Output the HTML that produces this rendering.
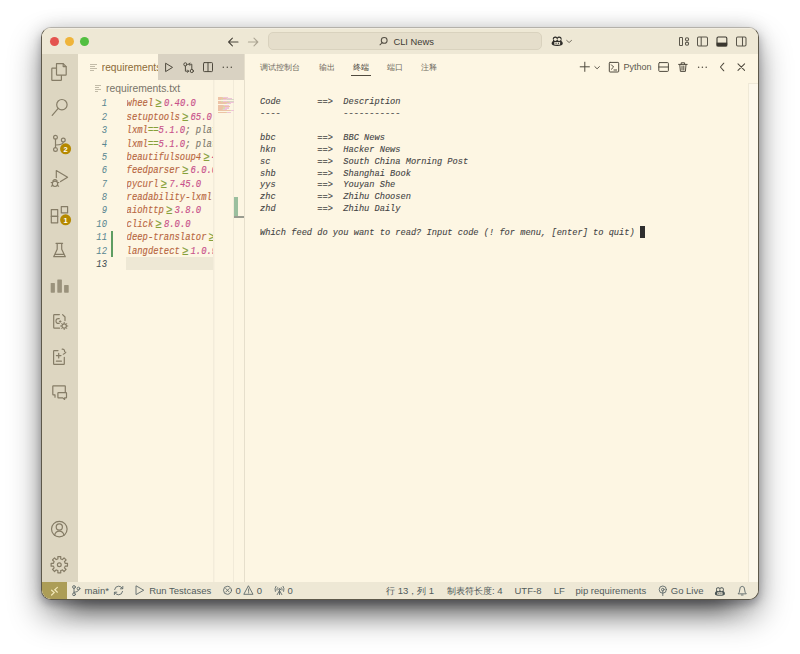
<!DOCTYPE html>
<html><head><meta charset="utf-8">
<style>
*{margin:0;padding:0;box-sizing:border-box}
html,body{width:800px;height:654px;background:#fff;overflow:hidden;font-family:"Liberation Sans",sans-serif}
.win{position:absolute;left:41px;top:27px;width:718px;height:573px;border:1px solid #5d584a;border-top-color:#b4b1aa;border-radius:10px;overflow:hidden;background:#FDF6E3;
 box-shadow:0 16px 32px rgba(0,0,0,.42),0 0 18px rgba(0,0,0,.14),-2px 5px 7px rgba(0,0,25,.10),2px 5px 7px rgba(0,0,25,.10)}
.a{position:absolute}
.t{position:absolute;white-space:pre}
.ov{position:absolute;left:0;top:0;width:716px;height:571px;overflow:visible}
.dot{position:absolute;top:9px;width:9px;height:9px;border-radius:50%}
.ln{position:absolute;left:45px;transform:translateY(2.0px) scaleY(1.16);transform-origin:0 50%;width:20px;text-align:right;font-family:"Liberation Mono",monospace;font-style:italic;font-size:8.9px;line-height:13.375px;color:#588590}
.ln.cur{color:#3f4c50}
.code{position:absolute;left:84.6px;transform:translateY(2.0px) scaleY(1.16);transform-origin:0 50%;-webkit-text-stroke:.12px currentColor;width:88px;overflow:hidden;font-family:"Liberation Mono",monospace;font-style:italic;font-size:8.9px;line-height:13.375px;white-space:pre}
.k{color:#B8663F}.o{color:#86A03A}.v{color:#C8508A}.g{color:#7f7a6e}
.lig{display:inline-block;width:10.68px;text-align:center;font-size:11px;line-height:10px;vertical-align:top;position:relative;top:1px}
.term{position:absolute;left:218px;transform:translateY(1.3px) scaleY(1.04);transform-origin:0 50%;-webkit-text-stroke:.1px currentColor;font-family:"Liberation Mono",monospace;font-style:italic;font-size:8.68px;line-height:12px;white-space:pre;color:#444}
.ptab{position:absolute;top:35px;font-size:8px;color:#6e6a60;line-height:10px;white-space:pre}
.cj{font-size:8.9px}
.st{position:absolute;top:556.8px;font-size:9.5px;line-height:11px;color:#525c5c;white-space:pre}
</style></head><body>
<div style="position:absolute;left:71px;top:420px;width:658px;height:180px;box-shadow:0 9.8px 23px rgba(0,0,0,.4)"></div>
<div class="win">
 <div class="a" style="left:0;top:0;width:716px;height:26px;background:#EEE8D5"></div><div class="a" style="left:0;top:0;width:716px;height:1px;background:#F3EEE2"></div>
 <div class="dot" style="left:8px;background:#E4544F"></div>
 <div class="dot" style="left:23px;background:#EFB43A"></div>
 <div class="dot" style="left:38px;background:#52BF40"></div>
 <div class="a" style="left:226px;top:4px;width:274px;height:18px;border-radius:5px;background:#E5DECB;border:1px solid #D9D2BE"></div>
 <div class="t" style="left:351.4px;top:8px;font-size:9.4px;line-height:11px;color:#3f3c36">CLI News</div>

 <div class="a" style="left:0;top:26px;width:35.5px;height:528px;background:#DDD6C1"></div>

 <div class="a" style="left:35.5px;top:26px;width:166.5px;height:25.5px;background:#D9D2C2"></div>
 <div class="a" style="left:35.5px;top:26px;width:80.5px;height:25.5px;background:#FDF6E3"></div>
 <div class="t" style="left:59.8px;top:34px;font-size:10.2px;line-height:11px;color:#8C6A36;width:56px;overflow:hidden">requirements.txt</div>
 <div class="t" style="left:64px;top:54.6px;font-size:10.35px;line-height:11px;color:#78746a">requirements.txt</div>

 <div class="a" style="left:84px;top:228.9px;width:89px;height:13.5px;background:#EEE8D5"></div>
 <div class="a" style="left:69px;top:203px;width:2px;height:25.6px;background:#5E9D62"></div>
<div class="ln" style="top:68.400px">1</div>
<div class="code" style="top:68.400px"><span class="k">wheel</span><span class="o lig">≥</span><span class="v">0.40.0</span></div>
<div class="ln" style="top:81.775px">2</div>
<div class="code" style="top:81.775px"><span class="k">setuptools</span><span class="o lig">≥</span><span class="v">65.0.0</span></div>
<div class="ln" style="top:95.150px">3</div>
<div class="code" style="top:95.150px"><span class="k">lxml</span><span class="o">==</span><span class="v">5.1.0</span><span class="g">; platform</span></div>
<div class="ln" style="top:108.525px">4</div>
<div class="code" style="top:108.525px"><span class="k">lxml</span><span class="o">==</span><span class="v">5.1.0</span><span class="g">; platform</span></div>
<div class="ln" style="top:121.900px">5</div>
<div class="code" style="top:121.900px"><span class="k">beautifulsoup4</span><span class="o lig">≥</span><span class="v">4.12</span></div>
<div class="ln" style="top:135.275px">6</div>
<div class="code" style="top:135.275px"><span class="k">feedparser</span><span class="o lig">≥</span><span class="v">6.0.0</span></div>
<div class="ln" style="top:148.650px">7</div>
<div class="code" style="top:148.650px"><span class="k">pycurl</span><span class="o lig">≥</span><span class="v">7.45.0</span></div>
<div class="ln" style="top:162.025px">8</div>
<div class="code" style="top:162.025px"><span class="k">readability-lxml</span></div>
<div class="ln" style="top:175.400px">9</div>
<div class="code" style="top:175.400px"><span class="k">aiohttp</span><span class="o lig">≥</span><span class="v">3.8.0</span></div>
<div class="ln" style="top:188.775px">10</div>
<div class="code" style="top:188.775px"><span class="k">click</span><span class="o lig">≥</span><span class="v">8.0.0</span></div>
<div class="ln" style="top:202.150px">11</div>
<div class="code" style="top:202.150px"><span class="k">deep-translator</span><span class="o lig">≥</span><span class="v">1.11</span></div>
<div class="ln" style="top:215.525px">12</div>
<div class="code" style="top:215.525px"><span class="k">langdetect</span><span class="o lig">≥</span><span class="v">1.0.9</span></div>
<div class="ln cur" style="top:228.900px">13</div>
<div class="code" style="top:228.900px"></div>
 <div class="a" style="left:171px;top:51.5px;width:1px;height:502.5px;background:#F3ECDA"></div><div class="a" style="left:172px;top:51.5px;width:1px;height:502.5px;background:#F8F1DF"></div>
 <div class="a" style="left:191px;top:51.5px;width:1px;height:502.5px;background:#F1EAD8"></div>
<div class="a" style="left:176.00px;top:68.60px;width:3.90px;height:1.05px;background:#EDC3A6"></div>
<div class="a" style="left:179.90px;top:68.60px;width:1.50px;height:1.05px;background:#D6DCB0"></div>
<div class="a" style="left:181.40px;top:68.60px;width:4.68px;height:1.05px;background:#EFC3D8"></div>
<div class="a" style="left:176.00px;top:69.96px;width:7.80px;height:1.05px;background:#EDC3A6"></div>
<div class="a" style="left:183.80px;top:69.96px;width:1.50px;height:1.05px;background:#D6DCB0"></div>
<div class="a" style="left:185.30px;top:69.96px;width:4.68px;height:1.05px;background:#EFC3D8"></div>
<div class="a" style="left:176.00px;top:71.32px;width:3.12px;height:1.05px;background:#EDC3A6"></div>
<div class="a" style="left:179.12px;top:71.32px;width:1.56px;height:1.05px;background:#D6DCB0"></div>
<div class="a" style="left:180.68px;top:71.32px;width:3.90px;height:1.05px;background:#EFC3D8"></div>
<div class="a" style="left:184.58px;top:71.32px;width:7.42px;height:1.05px;background:#D9D4C6"></div>
<div class="a" style="left:176.00px;top:72.68px;width:3.12px;height:1.05px;background:#EDC3A6"></div>
<div class="a" style="left:179.12px;top:72.68px;width:1.56px;height:1.05px;background:#D6DCB0"></div>
<div class="a" style="left:180.68px;top:72.68px;width:3.90px;height:1.05px;background:#EFC3D8"></div>
<div class="a" style="left:184.58px;top:72.68px;width:7.42px;height:1.05px;background:#D9D4C6"></div>
<div class="a" style="left:176.00px;top:74.04px;width:10.92px;height:1.05px;background:#EDC3A6"></div>
<div class="a" style="left:186.92px;top:74.04px;width:1.50px;height:1.05px;background:#D6DCB0"></div>
<div class="a" style="left:188.42px;top:74.04px;width:3.12px;height:1.05px;background:#EFC3D8"></div>
<div class="a" style="left:176.00px;top:75.40px;width:7.80px;height:1.05px;background:#EDC3A6"></div>
<div class="a" style="left:183.80px;top:75.40px;width:1.50px;height:1.05px;background:#D6DCB0"></div>
<div class="a" style="left:185.30px;top:75.40px;width:3.90px;height:1.05px;background:#EFC3D8"></div>
<div class="a" style="left:176.00px;top:76.76px;width:4.68px;height:1.05px;background:#EDC3A6"></div>
<div class="a" style="left:180.68px;top:76.76px;width:1.50px;height:1.05px;background:#D6DCB0"></div>
<div class="a" style="left:182.18px;top:76.76px;width:4.68px;height:1.05px;background:#EFC3D8"></div>
<div class="a" style="left:176.00px;top:78.12px;width:12.48px;height:1.05px;background:#EDC3A6"></div>
<div class="a" style="left:176.00px;top:79.48px;width:5.46px;height:1.05px;background:#EDC3A6"></div>
<div class="a" style="left:181.46px;top:79.48px;width:1.50px;height:1.05px;background:#D6DCB0"></div>
<div class="a" style="left:182.96px;top:79.48px;width:3.90px;height:1.05px;background:#EFC3D8"></div>
<div class="a" style="left:176.00px;top:80.84px;width:3.90px;height:1.05px;background:#EDC3A6"></div>
<div class="a" style="left:179.90px;top:80.84px;width:1.50px;height:1.05px;background:#D6DCB0"></div>
<div class="a" style="left:181.40px;top:80.84px;width:3.90px;height:1.05px;background:#EFC3D8"></div>
<div class="a" style="left:176.00px;top:82.20px;width:11.70px;height:1.05px;background:#EDC3A6"></div>
<div class="a" style="left:187.70px;top:82.20px;width:1.50px;height:1.05px;background:#D6DCB0"></div>
<div class="a" style="left:189.20px;top:82.20px;width:2.80px;height:1.05px;background:#EFC3D8"></div>
<div class="a" style="left:176.00px;top:83.56px;width:7.80px;height:1.05px;background:#EDC3A6"></div>
<div class="a" style="left:183.80px;top:83.56px;width:1.50px;height:1.05px;background:#D6DCB0"></div>
<div class="a" style="left:185.30px;top:83.56px;width:3.90px;height:1.05px;background:#EFC3D8"></div>
 <div class="a" style="left:192px;top:169px;width:3.6px;height:19px;background:#9BBF9E"></div>
 <div class="a" style="left:192px;top:188px;width:10.4px;height:1.6px;background:#9a9c90"></div>

 <div class="a" style="left:202px;top:26px;width:1px;height:528px;background:#E6DFCC"></div>
 <div class="ptab" style="left:218px">调试控制台</div>
 <div class="ptab" style="left:276.75px">输出</div>
 <div class="ptab" style="left:310.5px;color:#3f3c36">终端</div>
 <div class="ptab" style="left:345px">端口</div>
 <div class="ptab" style="left:379px">注释</div>
 <div class="a" style="left:309px;top:46.8px;width:19.5px;height:1px;background:#4f4a3e"></div>
 <div class="t" style="left:581.5px;top:34.3px;font-size:9px;line-height:11px;color:#5a564b">Python</div>
<div class="term" style="top:67.40px">Code       ==>  Description</div>
<div class="term" style="top:79.25px">----            -----------</div>
<div class="term" style="top:102.95px">bbc        ==>  BBC News</div>
<div class="term" style="top:114.80px">hkn        ==>  Hacker News</div>
<div class="term" style="top:126.65px">sc         ==>  South China Morning Post</div>
<div class="term" style="top:138.50px">shb        ==>  Shanghai Book</div>
<div class="term" style="top:150.35px">yys        ==>  Youyan She</div>
<div class="term" style="top:162.20px">zhc        ==>  Zhihu Choosen</div>
<div class="term" style="top:174.05px">zhd        ==>  Zhihu Daily</div>
<div class="term" style="top:197.75px">Which feed do you want to read? Input code (! for menu, [enter] to quit) </div>
 <div class="a" style="left:598px;top:197.75px;width:5px;height:12px;background:#2e2e2e"></div>
 <div class="a" style="left:707px;top:56px;width:9px;height:498px;background:#FDF8EB"></div><div class="a" style="left:706px;top:55px;width:1px;height:499px;background:#EFE9D7"></div><div class="a" style="left:706px;top:55px;width:10px;height:1px;background:#EFE9D7"></div>

 <div class="a" style="left:0;top:554px;width:716px;height:17px;background:#EEE8D5"></div>
 <div class="a" style="left:0;top:554px;width:24.75px;height:17px;background:#AC9D57"></div>
 <div class="st" style="left:42.6px">main*</div>
 <div class="st" style="left:107.2px">Run Testcases</div>
 <div class="st" style="left:193.5px">0</div>
 <div class="st" style="left:214.8px">0</div>
 <div class="st" style="left:245.5px">0</div>
 <div class="st" style="left:344px"><span class="cj">行</span> 13<span class="cj">，列</span> 1</div>
 <div class="st" style="left:405px"><span class="cj">制表符长度</span>: 4</div>
 <div class="st" style="left:472.5px">UTF-8</div>
 <div class="st" style="left:511.75px">LF</div>
 <div class="st" style="left:533.5px">pip requirements</div>
 <div class="st" style="left:628.75px">Go Live</div>

 <svg class="ov" viewBox="42 28 716 571" width="716" height="571">

<!-- activity bar icons -->
<g stroke="#857c66" fill="none" stroke-width="1.2" stroke-linejoin="round" stroke-linecap="round">
 <path d="M55.9 68.2H52.4Q51.8 68.2 51.8 68.8V79.9Q51.8 80.4 52.4 80.4H60.8Q61.4 80.4 61.4 79.9V75.6"/>
 <path d="M56.5 63.7H63.2L66.2 66.7V74.5Q66.2 75.1 65.6 75.1H57.1Q56.5 75.1 56.5 74.5Z"/>
 <path d="M63.2 63.9V66.6H66"/>
 <circle cx="61.9" cy="104.7" r="5.2"/>
 <path d="M58.2 108.4L52.2 115.4"/>
 <circle cx="55.5" cy="137.3" r="1.9"/>
 <circle cx="63.3" cy="140.1" r="1.9"/>
 <circle cx="55.5" cy="149.5" r="1.9"/>
 <path d="M55.5 139.2V147.6M63.3 142Q63.3 144.8 55.8 145"/>
 <path d="M56.3 177.6V170.6L67.6 177.2L60.6 181.6"/>
 <circle cx="55" cy="183.8" r="2.7"/>
 <path d="M53 180.6Q55 178.8 57 180.6M51.2 182.5H52.3M57.7 182.5H58.8M51.4 186.2L52.7 185.3M58.6 186.2L57.3 185.3"/>
 <rect x="51.3" y="209.6" width="6.4" height="6.8"/>
 <rect x="51.3" y="216.4" width="6.4" height="6.4"/>
 <rect x="61.3" y="206.6" width="6.3" height="6.3"/>
 <path d="M56 243.3H62.6M57.2 243.5V249.2L53.7 256.7H65.3L61.7 249.2V243.5M54.9 254.3H64.2"/>
 <path d="M59.4 314.6H54.4Q53.7 314.6 53.7 315.3V327.6Q53.7 328.2 54.4 328.2H59.6M62.6 314.6L65 317V320.6"/>
 <path d="M59.2 318.6Q56 318.2 56 321Q56 323.8 59.2 323.3"/>
 <circle cx="64.2" cy="326" r="2.2"/>
 <path d="M64.2 322.4V323.3M64.2 328.7V329.6M60.6 326H61.5M66.9 326H67.8M61.7 323.5L62.3 324.1M66.1 327.9L66.7 328.5M66.7 323.5L66.1 324.1M62.3 327.9L61.7 328.5" stroke-width="1"/>
 <path d="M60.2 320.6V322.4M59.3 321.5H61.1" stroke-width=".9"/>
 <path d="M58 350.6H54.2Q53.6 350.6 53.6 351.2V363.7Q53.6 364.3 54.2 364.3H63.8Q64.3 364.3 64.3 363.7V357.3M58.7 353.3V358M56.4 355.6H61M56.4 361.2H61.4M62.2 349.2Q64.6 349 64.6 351.6M63.3 354.2Q65 353.6 65.8 352.2"/>
 <path d="M55 397.2V394.8H53.3Q52.8 394.8 52.8 394.2V386.3Q52.8 385.8 53.3 385.8H64.8Q65.3 385.8 65.3 386.3V392.4"/>
 <path d="M58.4 392.6H66Q66.5 392.6 66.5 393.2V397.3Q66.5 397.9 66 397.9H64.6V399.5L62.8 397.9H58.4Q57.9 397.9 57.9 397.3V393.2Q57.9 392.6 58.4 392.6Z"/>
 <circle cx="59.3" cy="529.1" r="7.8"/>
 <circle cx="59.3" cy="527" r="3.1"/>
 <path d="M54.6 535.4Q55.4 531.2 59.3 531.2Q63.2 531.2 64 535.4"/>
 <path d="M57.54 558.97 L57.90 558.87 L57.84 556.53 L60.76 556.53 L60.70 558.87 L61.06 558.97 L62.11 559.40 L62.43 559.58 L64.05 557.89 L66.11 559.95 L64.42 561.57 L64.60 561.89 L65.03 562.94 L65.13 563.30 L67.47 563.24 L67.47 566.16 L65.13 566.10 L65.03 566.46 L64.60 567.51 L64.42 567.83 L66.11 569.45 L64.05 571.51 L62.43 569.82 L62.11 570.00 L61.06 570.43 L60.70 570.53 L60.76 572.87 L57.84 572.87 L57.90 570.53 L57.54 570.43 L56.49 570.00 L56.17 569.82 L54.55 571.51 L52.49 569.45 L54.18 567.83 L54.00 567.51 L53.57 566.46 L53.47 566.10 L51.13 566.16 L51.13 563.24 L53.47 563.30 L53.57 562.94 L54.00 561.89 L54.18 561.57 L52.49 559.95 L54.55 557.89 L56.17 559.58 L56.49 559.40Z"/>
 <circle cx="59.3" cy="564.7" r="1.9"/>
</g>
<g fill="#9a927c">
 <rect x="50.7" y="283" width="4.2" height="9.7" rx=".6"/>
 <rect x="57.3" y="279.4" width="4.6" height="13.3" rx=".6"/>
 <rect x="64.1" y="285.1" width="4.6" height="7.6" rx=".6"/>
</g>
<circle cx="65.6" cy="148.8" r="5.5" fill="#B58900"/>
<circle cx="65.6" cy="219.8" r="5.5" fill="#B58900"/>
<text x="65.6" y="151.6" font-size="7.5" font-weight="bold" fill="#fff" text-anchor="middle" font-family="Liberation Sans">2</text>
<text x="65.6" y="222.6" font-size="7.5" font-weight="bold" fill="#fff" text-anchor="middle" font-family="Liberation Sans">1</text>

<!-- title bar -->
<g stroke="#4a463c" fill="none" stroke-width="1.1" stroke-linecap="round" stroke-linejoin="round">
 <path d="M238 42H228.6M232.4 38.2L228.6 42L232.4 45.8"/>
</g>
<g stroke="#aca593" fill="none" stroke-width="1.1" stroke-linecap="round" stroke-linejoin="round">
 <path d="M248.4 42H257.8M254 38.2L257.8 42L254 45.8"/>
</g>
<g stroke="#555045" fill="none" stroke-width="1.05" stroke-linecap="round">
 <circle cx="384.2" cy="40.4" r="2.9"/>
 <path d="M382.2 42.5L380 44.8"/>
</g>
<path d="M551.6 43.6Q551.6 41.6 553 40.9V40.2Q552.4 38.4 553.3 37.3Q554.2 36.3 555.6 36.5Q556.6 36.7 557.2 37.5Q557.8 36.7 558.8 36.5Q560.2 36.3 561.1 37.3Q562 38.4 561.4 40.2V40.9Q562.8 41.6 562.8 43.6Q562.8 45.9 557.2 45.9Q551.6 45.9 551.6 43.6Z" fill="#2f2d29"/>
<circle cx="555.3" cy="39.3" r="1.6" fill="#EEE8D5"/><circle cx="559.1" cy="39.3" r="1.6" fill="#EEE8D5"/>
<rect x="554.3" y="41.9" width="5.8" height="2.9" rx=".6" fill="#EEE8D5"/>
<rect x="555.6" y="42.6" width=".9" height="1.5" fill="#2f2d29"/><rect x="557.9" y="42.6" width=".9" height="1.5" fill="#2f2d29"/>
<path d="M566.4 40.2l2.7 2.3 2.7-2.3" stroke="#666052" fill="none" stroke-width=".9"/>
<g stroke="#5a564b" fill="none" stroke-width="1.05">
 <rect x="679.5" y="37.5" width="3" height="8" rx=".6"/>
 <circle cx="687" cy="39.3" r="1.6"/>
 <circle cx="687" cy="43.7" r="1.6"/>
 <rect x="697.5" y="37" width="10" height="9" rx="1.2"/>
 <path d="M701.2 37V46"/>
 <rect x="736.5" y="37" width="9.5" height="9" rx="1.2"/>
 <path d="M742.5 37V46"/>
</g>
<rect x="717" y="37" width="9.8" height="9" rx="1.2" stroke="#3a372f" fill="none" stroke-width="1.1"/>
<rect x="716.6" y="42.6" width="10.6" height="3.8" fill="#3a372f"/>

<!-- tab icons -->
<g stroke="#c2bba8" stroke-width="1">
 <path d="M90 64.5H97M90 66.5H95M90 68.5H97M90 70.5H94"/>
 <path d="M95 85.5H101M95 87.5H99M95 89.5H101M95 91.5H98"/>
</g>
<!-- editor actions -->
<g stroke="#4F4A3E" fill="none" stroke-width="1" stroke-linejoin="round" stroke-linecap="round">
 <path d="M165.6 63.6V71.6L172.2 67.6Z"/>
 <circle cx="185.4" cy="64.4" r="1.6"/>
 <circle cx="191.8" cy="71" r="1.6"/>
 <path d="M185.4 66V71.2H188.5M187.5 70L188.7 71.2L187.5 72.4M191.8 69.4V64.2H188.8M189.8 63L188.6 64.2L189.8 65.4"/>
 <rect x="203.5" y="62.6" width="9" height="9" rx=".8"/>
 <path d="M208 62.6V71.6"/>
</g>
<g fill="#4F4A3E"><circle cx="223.3" cy="67.2" r=".75"/><circle cx="227.3" cy="67.2" r=".75"/><circle cx="231.3" cy="67.2" r=".75"/></g>

<!-- panel actions -->
<g stroke="#4F4A3E" fill="none" stroke-width="1" stroke-linejoin="round" stroke-linecap="round">
 <path d="M584.8 62.2V71.4M580.2 66.8H589.4"/>
 <path d="M594.8 66.6L597.1 68.8L599.4 66.6" stroke-width=".9"/>
 <rect x="609.3" y="62.4" width="9.4" height="9.6" rx=".8"/>
 <path d="M611.4 64.8L613.6 67L611.4 69.2M614 70H616.6"/>
 <rect x="658.8" y="62.6" width="9.6" height="8.8" rx=".8"/>
 <path d="M658.8 67H668.4"/>
 <path d="M678.6 64.4H687.2M681.2 64.2V62.8H684.6V64.2M679.8 64.6L680.4 71.4H685.4L686 64.6M682 66V70M683.8 66V70"/>
 <path d="M723.8 63.2L720.4 67L723.8 70.8" stroke-width="1.05"/>
 <path d="M738 63.8L744.6 70.4M744.6 63.8L738 70.4" stroke-width="1.05"/>
</g>
<g fill="#4F4A3E"><circle cx="698.6" cy="67.2" r=".75"/><circle cx="702.4" cy="67.2" r=".75"/><circle cx="706.2" cy="67.2" r=".75"/></g>

<!-- status bar icons -->
<path d="M51.6 590.2L54.2 592.6L51.6 595M57.4 587.4L54.8 589.8L57.4 592.2" stroke="#F2E8B8" stroke-width="1.2" fill="none" stroke-linecap="round"/>
<g stroke="#5f6a6a" fill="none" stroke-width=".9" stroke-linejoin="round" stroke-linecap="round">
 <circle cx="74" cy="587" r="1.4"/>
 <circle cx="74" cy="594.3" r="1.4"/>
 <circle cx="78.5" cy="588.6" r="1.4"/>
 <path d="M74 588.4V592.9M78.5 590Q78.5 592 74.2 592.2"/>
 <path d="M122.6 588.6Q121.2 586.2 118.6 586.2Q115.2 586.2 114.6 589.6M114.6 592.4Q116 594.8 118.6 594.8Q122 594.8 122.6 591.4M122.8 586.4V588.8H120.4M114.4 594.6V592.2H116.8"/>
 <path d="M136 586.2V594.6L143.4 590.4Z"/>
 <circle cx="227.5" cy="590.3" r="4"/>
 <path d="M225.8 588.6L229.2 592M229.2 588.6L225.8 592"/>
 <path d="M248.6 586.1L253 594.3H244.2Z"/>
 <path d="M248.6 589V591.4M248.6 592.6V593"/>
 <path d="M279.5 590.2V594.6M277.2 594.6L279.5 590.5L281.8 594.6M277.6 587.6Q276.6 588.7 276.9 590.2M281.4 587.6Q282.4 588.7 282.1 590.2M275.9 586.3Q274.4 588.4 275.3 591.4M283.1 586.3Q284.6 588.4 283.7 591.4"/>
 <circle cx="279.5" cy="589.3" r=".8"/>
  <circle cx="662.8" cy="589.6" r="3.6"/>
 <circle cx="662.8" cy="589.6" r="1.3"/>
 <path d="M662.8 590.9V595.6"/>
 <path d="M738.4 593.6Q739.7 592.6 739.7 590Q739.7 586.3 742.2 586.3Q744.7 586.3 744.7 590Q744.7 592.6 746 593.6ZM741.3 595H743.1"/>
</g>
<g transform="translate(719.9 591.5) scale(.9) translate(-557.2 -41.2)">
<path d="M551.6 43.6Q551.6 41.6 553 40.9V40.2Q552.4 38.4 553.3 37.3Q554.2 36.3 555.6 36.5Q556.6 36.7 557.2 37.5Q557.8 36.7 558.8 36.5Q560.2 36.3 561.1 37.3Q562 38.4 561.4 40.2V40.9Q562.8 41.6 562.8 43.6Q562.8 45.9 557.2 45.9Q551.6 45.9 551.6 43.6Z" fill="#4d5756"/>
<circle cx="555.3" cy="39.3" r="1.6" fill="#EEE8D5"/><circle cx="559.1" cy="39.3" r="1.6" fill="#EEE8D5"/>
<rect x="554.3" y="41.9" width="5.8" height="2.9" rx=".6" fill="#EEE8D5"/>
<rect x="555.6" y="42.6" width=".9" height="1.5" fill="#4d5756"/><rect x="557.9" y="42.6" width=".9" height="1.5" fill="#4d5756"/>
</g>

 </svg>
</div>
</body></html>
